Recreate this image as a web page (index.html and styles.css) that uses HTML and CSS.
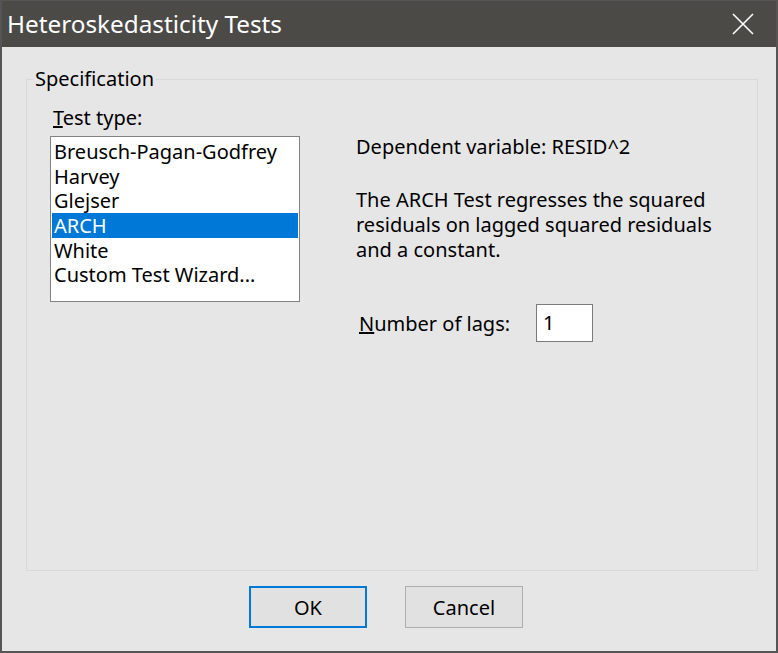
FILE: index.html
```html
<!DOCTYPE html>
<html>
<head>
<meta charset="utf-8">
<link rel="stylesheet" href="styles.css">
</head>
<body>
<div class="window">
  <div class="titlebar">
    <span class="title">Heteroskedasticity Tests</span>
    <svg class="close" width="22" height="22" viewBox="0 0 22 22"><path d="M1 1 L21 21 M21 1 L1 21" stroke="#ffffff" stroke-width="1.6" fill="none"/></svg>
  </div>
  <div class="content">
    <fieldset class="group">
      <legend>Specification</legend>
      <div class="cols">
        <div class="left">
          <div class="label"><u>T</u>est type:</div>
          <div class="listbox">
            <div class="item">Breusch-Pagan-Godfrey</div>
            <div class="item">Harvey</div>
            <div class="item">Glejser</div>
            <div class="item selected">ARCH</div>
            <div class="item">White</div>
            <div class="item">Custom Test Wizard...</div>
          </div>
        </div>
        <div class="right">
          <div class="dep">Dependent variable: RESID^2</div>
          <div class="desc">The ARCH Test regresses the squared residuals on lagged squared residuals and a constant.</div>
          <div class="lags">
            <span class="lagslabel"><u>N</u>umber of lags:</span>
            <span class="input">1</span>
          </div>
        </div>
      </div>
    </fieldset>
    <div class="buttons">
      <button class="btn default">OK</button>
      <button class="btn">Cancel</button>
    </div>
  </div>
</div>
</body>
</html>
```
FILE: styles.css
```css
html, body {
  margin: 0;
  padding: 0;
  background: #e6e6e6;
}
.window {
  width: 778px;
  height: 653px;
  box-sizing: border-box;
  border: 2px solid #555555;
  border-top: 1px solid #555555;
  background: #e6e6e6;
  display: flex;
  flex-direction: column;
  font-family: "Noto Sans", "Open Sans", sans-serif;
  color: #000;
}
.titlebar {
  height: 46px;
  background: #4b4a47;
  display: flex;
  align-items: center;
  justify-content: space-between;
  padding: 0 22px 0 5px;
  box-sizing: border-box;
  flex: none;
}
.title {
  color: #ffffff;
  font-size: 24.3px;
  position: relative;
  top: -1px;
}
.close {
  display: block;
}
.content {
  flex: 1;
  display: flex;
  flex-direction: column;
  padding: 20px 18px 0 24px;
}
.group {
  margin: 0;
  border: 1px solid #d9d9d9;
  padding: 0;
  height: 504px;
  box-sizing: border-box;
}
.group legend {
  font-size: 20px;
  padding: 0 2px;
  margin-left: 6px;
  line-height: 24px;
}
.cols {
  display: flex;
  padding: 15px 0 0 23px;
}
.left {
  width: 250px;
  flex: none;
}
.label {
  font-size: 20px;
  line-height: 24px;
  margin-left: 3px;
  margin-bottom: 6px;
}
.listbox {
  width: 250px;
  height: 166px;
  box-sizing: border-box;
  border: 1px solid #828282;
  background: #ffffff;
  padding: 2px 1px 1px 1px;
}
.item {
  font-size: 20px;
  height: 24.7px;
  line-height: 25.5px;
  padding-left: 2px;
  white-space: nowrap;
}
.item.selected {
  background: #0078d7;
  color: #ffffff;
}
.right {
  margin-left: 56px;
  width: 362px;
  padding-top: 28px;
}
.dep {
  font-size: 20px;
  line-height: 25px;
}
.desc {
  font-size: 20px;
  line-height: 25px;
  margin-top: 28px;
}
.lags {
  display: flex;
  align-items: center;
  margin-top: 42px;
}
.lagslabel {
  font-size: 20px;
  margin-left: 3px;
  width: 177px;
}
.input {
  width: 57px;
  height: 38px;
  box-sizing: border-box;
  border: 1px solid #7a7a7a;
  background: #ffffff;
  font-size: 20px;
  line-height: 36px;
  padding-left: 6px;
}
.buttons {
  display: flex;
  padding: 15px 0 0 223px;
  gap: 38px;
}
.btn {
  width: 118px;
  height: 42px;
  box-sizing: border-box;
  background: #e1e1e1;
  border: 1px solid #adadad;
  font-family: "Noto Sans", "Open Sans", sans-serif;
  font-size: 20px;
  color: #000;
  padding: 0;
}
.btn.default {
  border: 2px solid #0078d7;
}
```
